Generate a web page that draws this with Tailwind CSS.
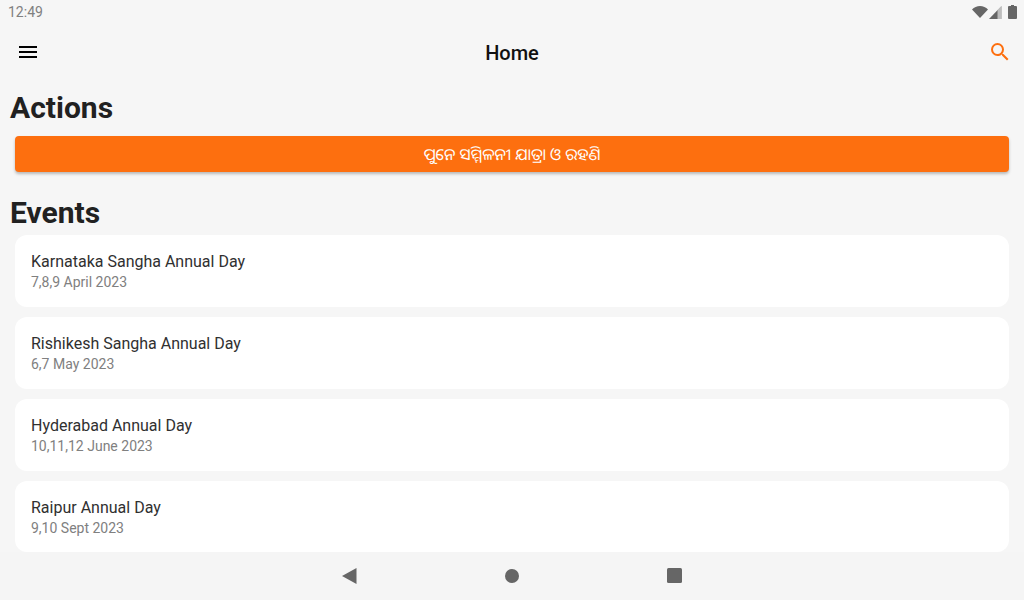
<!DOCTYPE html>
<html>
<head>
<meta charset="utf-8">
<script src="https://cdn.jsdelivr.net/npm/@tailwindcss/browser@4"></script>
</head>
<body class="w-[1024px] h-[600px] overflow-hidden bg-[#f6f6f6] font-[Roboto,sans-serif] text-[#212121] flex flex-col">
<div class="h-6 shrink-0 flex items-center justify-between pl-2 pr-[7px]">
  <span class="text-sm leading-6 text-[#808080]">12:49</span>
  <div class="flex items-center text-[#666] -mt-[1px]">
    <svg width="16" height="14" viewBox="0 0 16 14"><path d="M0 4.500C2 2.300 5 1 8 1s6 1.300 8 3.500L8 13z" fill="#666"/></svg>
    <svg width="13" height="14" viewBox="0 0 13 14" class="ml-[1px]"><path d="M12.500 1v13H0z" fill="#666"/><path d="M12.500 1v13H8.500V5z" fill="#f6f6f6" opacity=".6"/></svg>
    <svg width="9" height="14" viewBox="0 0 9 14" class="ml-[6px]"><path d="M3 0h3v1h2a1 1 0 0 1 1 1v11a1 1 0 0 1-1 1H1a1 1 0 0 1-1-1V2a1 1 0 0 1 1-1h2z" fill="#666"/></svg>
  </div>
</div>
<header class="h-[56px] shrink-0 flex items-center justify-between pl-[16px] pr-[12px] relative">
  <svg width="24" height="24" viewBox="0 0 24 24"><path d="M3 18h18v-2H3zm0-5h18v-2H3zm0-7v2h18V6z" fill="#000"/></svg>
  <h1 class="absolute left-0 right-0 text-center text-xl leading-[26px] font-medium text-[#111] mt-[1px]">Home</h1>
  <svg width="24" height="24" viewBox="0 0 24 24"><path d="M15.500 14h-.79l-.28-.27A6.470 6.470 0 0 0 16 9.500 6.500 6.500 0 1 0 9.500 16c1.610 0 3.090-.59 4.230-1.570l.27.28v.79l5 4.990L20.490 19zm-6 0C7.010 14 5 11.990 5 9.500S7.010 5 9.500 5 14 7.010 14 9.500 11.990 14 9.500 14z" fill="#fd6f0f"/></svg>
</header>
<main class="flex-1 min-h-0 overflow-hidden flex flex-col">
  <h2 class="ml-[10px] mt-[10px] text-[30px] leading-[36px] font-bold text-[#212121]">Actions</h2>
  <button class="mx-[15px] mt-[10px] h-9 w-[994px] shrink-0 rounded-[4px] bg-[#fd6f0f] text-white text-base leading-9 font-normal text-center shadow-[0_2px_3px_rgba(0,0,0,0.25)] font-['Noto_Sans_Oriya','Noto_Sans',Roboto,sans-serif]">ପୁନେ ସମ୍ମିଳନୀ ଯାତ୍ରା ଓ ରହଣି</button>
  <h2 class="ml-[10px] mt-[23px] text-[30px] leading-[36px] font-bold text-[#212121]">Events</h2>
  <div class="mx-[15px] mt-[4px] flex flex-col gap-[10px]">
    <div class="h-[72px] shrink-0 rounded-xl bg-white pl-4 pt-[17px] flex flex-col">
      <div class="text-base leading-5 text-[#303030]">Karnataka Sangha Annual Day</div>
      <div class="text-sm leading-5 text-[#808080]">7,8,9 April 2023</div>
    </div>
    <div class="h-[72px] shrink-0 rounded-xl bg-white pl-4 pt-[17px] flex flex-col">
      <div class="text-base leading-5 text-[#303030]">Rishikesh Sangha Annual Day</div>
      <div class="text-sm leading-5 text-[#808080]">6,7 May 2023</div>
    </div>
    <div class="h-[72px] shrink-0 rounded-xl bg-white pl-4 pt-[17px] flex flex-col">
      <div class="text-base leading-5 text-[#303030]">Hyderabad Annual Day</div>
      <div class="text-sm leading-5 text-[#808080]">10,11,12 June 2023</div>
    </div>
    <div class="h-[71px] shrink-0 rounded-xl bg-white pl-4 pt-[17px] flex flex-col">
      <div class="text-base leading-5 text-[#303030]">Raipur Annual Day</div>
      <div class="text-sm leading-5 text-[#808080]">9,10 Sept 2023</div>
    </div>
  </div>
</main>
<nav class="h-12 shrink-0 bg-[#f5f5f5] flex items-center justify-center gap-[148px]">
  <svg width="16" height="16" viewBox="0 0 16 16"><path d="M15.500 0v16L1 8z" fill="#666"/></svg>
  <svg width="14" height="14" viewBox="0 0 14 14"><circle cx="7" cy="7" r="7" fill="#666"/></svg>
  <svg width="16" height="16" viewBox="0 0 16 16"><rect x="0" y="0" width="15" height="15" rx="1.500" fill="#666"/></svg>
</nav>
</body>
</html>
